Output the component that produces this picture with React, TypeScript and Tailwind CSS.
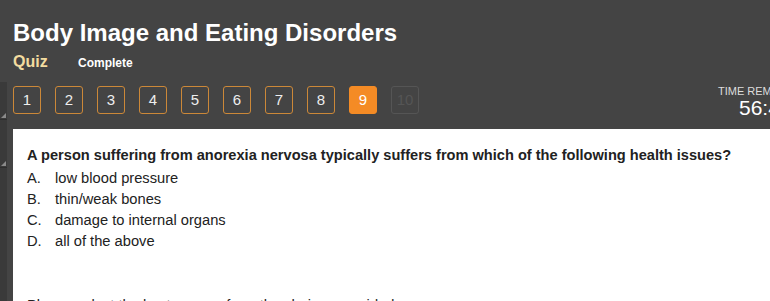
import React from 'react';

const options = [
  ['A.', 'low blood pressure'],
  ['B.', 'thin/weak bones'],
  ['C.', 'damage to internal organs'],
  ['D.', 'all of the above'],
];

export default function App() {
  return (
    <div className="relative w-[770px] h-[301px] overflow-hidden bg-[#444444] font-['Liberation_Sans',Arial,sans-serif]">
      {/* left resize strip */}
      <div className="absolute left-0 top-[82px] w-[7px] h-[219px] flex flex-col">
        <div className="relative h-[38px] bg-[#3a3a3a] border-b border-[#2e2e2e]">
          <div className="absolute right-[1px] bottom-[1px] w-0 h-0 border-l-[5px] border-l-transparent border-b-[5px] border-b-[#8a8a8a]" />
        </div>
        <div className="relative h-[48px] bg-[#3a3a3a] border-b border-[#2e2e2e]">
          <div className="absolute right-[1px] bottom-[1px] w-0 h-0 border-l-[5px] border-l-transparent border-b-[5px] border-b-[#8a8a8a]" />
        </div>
        <div className="flex-1 bg-[#3a3a3a]" />
      </div>

      <div className="pl-[13px] pt-[19px]">
        <h1 className="text-[24px] leading-[28px] font-bold text-white">Body Image and Eating Disorders</h1>
        <div className="flex items-baseline mt-[3px] h-[22px]">
          <span className="text-[16px] font-bold text-[#f3dca0] w-[65px]">Quiz</span>
          <span className="text-[12px] font-bold text-white">Complete</span>
        </div>

        <div className="flex items-start justify-between mt-[14px] h-[30px]">
          <div className="flex gap-[14px]">
            {Array.from({ length: 10 }, (_, i) => i + 1).map((n) => (
              <div
                key={n}
                className={
                  n === 9
                    ? 'w-[28px] h-[28px] rounded-[3px] bg-[#f48b25] border border-[#f48b25] text-white flex items-center justify-center text-[15px]'
                    : n === 10
                    ? 'w-[28px] h-[28px] rounded-[3px] border border-[#555555] text-[#555555] flex items-center justify-center text-[15px]'
                    : 'w-[28px] h-[28px] rounded-[3px] border border-[#cc8838] text-[#eeeeee] flex items-center justify-center text-[15px]'
                }
              >
                {n}
              </div>
            ))}
          </div>
          <div className="flex flex-col items-start w-[52px] -mt-[1px] whitespace-nowrap">
            <span className="text-[11px] leading-[12px] text-[#dddddd]">TIME REMAINING</span>
            <span className="text-[21px] leading-[22px] text-white pl-[21px]">56:42</span>
          </div>
        </div>

        <div className="bg-white mt-[13px] h-[200px] pl-[14px] pt-[18px] text-[#222222]">
          <p className="text-[14.6px] leading-[17px] font-bold">
            A person suffering from anorexia nervosa typically suffers from which of the following health issues?
          </p>
          <div className="mt-[4px] flex flex-col">
            {options.map(([l, t]) => (
              <div key={l} className="flex text-[14.7px] leading-[21px]">
                <span className="w-[28px]">{l}</span>
                <span>{t}</span>
              </div>
            ))}
          </div>
          <p className="mt-[45px] text-[14.7px] leading-[17px]">Please select the best answer from the choices provided</p>
        </div>
      </div>
    </div>
  );
}
